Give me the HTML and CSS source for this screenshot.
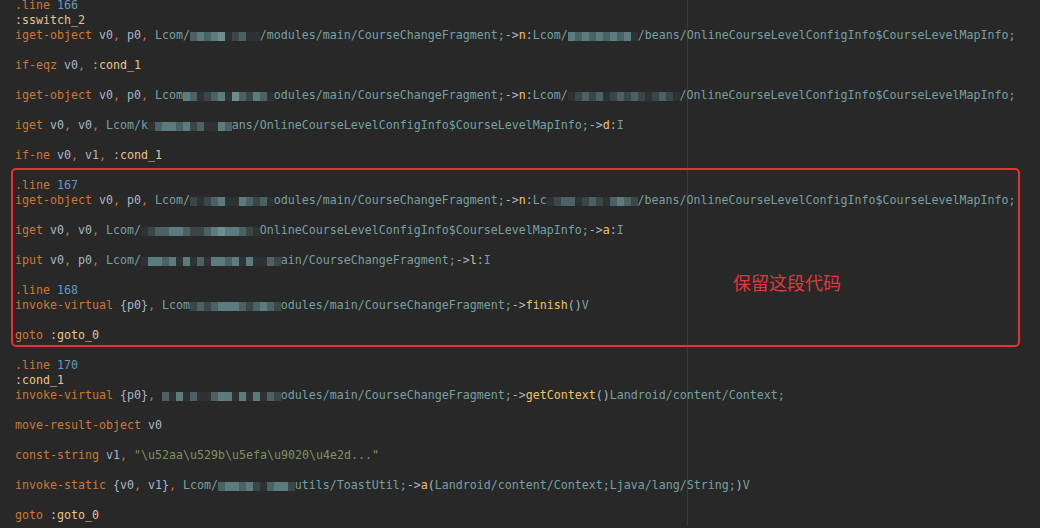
FILE: index.html
```html
<!DOCTYPE html>
<html lang="zh-CN">
<head>
    <meta charset="UTF-8">
    <meta name="viewport" content="width=device-width, initial-scale=1.0">
    <title>CourseChangeFragment.smali</title>
    <link rel="stylesheet" href="styles.css">
</head>
<body>

<div class="editor">
<pre class="code"><span class="k">.line</span> <span class="n">166</span>
<span class="l">:sswitch_2</span>
<span class="k">iget-object</span> <span class="r">v0</span><span class="p">,</span> <span class="r">p0</span><span class="p">,</span> <span class="t">Lcom/</span><span class="rd"><i class="b"></i><i class="c"></i><i class="b"></i><i class="c"></i><i class="d"></i><i></i><i class="a"></i><i class="b"></i><i></i><i></i></span><span class="t">/modules/main/CourseChangeFragment;</span>-&gt;<span class="f">n</span>:<span class="t">Lcom/</span><span class="rd"><i class="c"></i><i class="b"></i><i class="c"></i><i class="b"></i><i class="c"></i><i class="b"></i><i class="c"></i><i class="b"></i><i class="c"></i><i></i></span><span class="t">/beans/OnlineCourseLevelConfigInfo$CourseLevelMapInfo;</span>

<span class="k">if-eqz</span> <span class="r">v0</span><span class="p">,</span> :<span class="l">cond_1</span>

<span class="k">iget-object</span> <span class="r">v0</span><span class="p">,</span> <span class="r">p0</span><span class="p">,</span> <span class="t">Lcom</span><span class="rd"><i class="c"></i><i class="b"></i><i></i><i class="a"></i><i class="b"></i><i class="c"></i><i></i><i class="d"></i><i class="b"></i><i class="a"></i><i class="c"></i><i class="b"></i><i></i></span><span class="t">odules/main/CourseChangeFragment;</span>-&gt;<span class="f">n</span>:<span class="t">Lcom/</span><span class="rd"><i></i><i class="a"></i><i class="b"></i><i class="a"></i><i class="b"></i><i></i><i class="a"></i><i class="b"></i><i class="a"></i><i class="b"></i><i class="a"></i><i></i><i class="a"></i><i class="b"></i><i class="a"></i><i></i></span><span class="t">/OnlineCourseLevelConfigInfo$CourseLevelMapInfo;</span>

<span class="k">iget</span> <span class="r">v0</span><span class="p">,</span> <span class="r">v0</span><span class="p">,</span> <span class="t">Lcom/k</span><span class="rd"><i></i><i class="b"></i><i class="c"></i><i class="c"></i><i class="b"></i><i class="c"></i><i class="a"></i><i class="b"></i><i></i><i></i><i class="c"></i><i class="b"></i></span><span class="t">ans/OnlineCourseLevelConfigInfo$CourseLevelMapInfo;</span>-&gt;<span class="f">d</span>:<span class="t">I</span>

<span class="k">if-ne</span> <span class="r">v0</span><span class="p">,</span> <span class="r">v1</span><span class="p">,</span> :<span class="l">cond_1</span>

<span class="k">.line</span> <span class="n">167</span>
<span class="k">iget-object</span> <span class="r">v0</span><span class="p">,</span> <span class="r">p0</span><span class="p">,</span> <span class="t">Lcom/</span><span class="rd"><i class="a"></i><i></i><i class="a"></i><i class="b"></i><i class="c"></i><i></i><i></i><i class="c"></i><i class="b"></i><i class="a"></i><i class="b"></i><i></i></span><span class="t">odules/main/CourseChangeFragment;</span>-&gt;<span class="f">n</span>:<span class="t">Lc</span><span class="rd"><i></i><i class="a"></i><i class="b"></i><i class="b"></i><i></i><i class="a"></i><i class="b"></i><i class="a"></i><i></i><i class="b"></i><i class="c"></i><i class="b"></i><i class="a"></i></span><span class="t">/beans/OnlineCourseLevelConfigInfo$CourseLevelMapInfo;</span>

<span class="k">iget</span> <span class="r">v0</span><span class="p">,</span> <span class="r">v0</span><span class="p">,</span> <span class="t">Lcom/</span><span class="rd"><i></i><i class="a"></i><i class="b"></i><i class="b"></i><i class="c"></i><i class="c"></i><i class="b"></i><i class="a"></i><i class="a"></i><i class="b"></i><i class="c"></i><i class="d"></i><i class="c"></i><i class="c"></i><i class="b"></i><i class="a"></i><i></i></span><span class="t">OnlineCourseLevelConfigInfo$CourseLevelMapInfo;</span>-&gt;<span class="f">a</span>:<span class="t">I</span>

<span class="k">iput</span> <span class="r">v0</span><span class="p">,</span> <span class="r">p0</span><span class="p">,</span> <span class="t">Lcom/</span><span class="rd"><i></i><i class="c"></i><i class="c"></i><i class="b"></i><i class="c"></i><i></i><i class="c"></i><i></i><i class="b"></i><i></i><i class="c"></i><i class="c"></i><i class="b"></i><i class="c"></i><i></i><i class="c"></i><i></i><i></i><i class="b"></i><i class="a"></i></span><span class="t">ain/CourseChangeFragment;</span>-&gt;<span class="f">l</span>:<span class="t">I</span>

<span class="k">.line</span> <span class="n">168</span>
<span class="k">invoke-virtual</span> {<span class="r">p0</span>}<span class="p">,</span> <span class="t">Lcom</span><span class="rd"><i class="a"></i><i class="b"></i><i class="a"></i><i class="b"></i><i class="c"></i><i class="c"></i><i class="c"></i><i class="b"></i><i class="a"></i><i class="b"></i><i class="c"></i><i class="b"></i><i class="a"></i></span><span class="t">odules/main/CourseChangeFragment;</span>-&gt;<span class="f">finish</span>()<span class="t">V</span>

<span class="k">goto</span> <span class="l">:goto_0</span>

<span class="k">.line</span> <span class="n">170</span>
<span class="l">:cond_1</span>
<span class="k">invoke-virtual</span> {<span class="r">p0</span>}<span class="p">,</span> <span class="rd"><i class="b"></i><i></i><i class="c"></i><i></i><i class="b"></i><i></i><i></i><i class="b"></i><i class="c"></i><i class="c"></i><i></i><i class="c"></i><i></i><i class="c"></i><i></i><i class="b"></i><i class="a"></i></span><span class="t">odules/main/CourseChangeFragment;</span>-&gt;<span class="f">getContext</span>()<span class="t">Landroid/content/Context;</span>

<span class="k">move-result-object</span> <span class="r">v0</span>

<span class="k">const-string</span> <span class="r">v1</span><span class="p">,</span> <span class="s">"\u52aa\u529b\u5efa\u9020\u4e2d..."</span>

<span class="k">invoke-static</span> {<span class="r">v0</span><span class="p">,</span> <span class="r">v1</span>}<span class="p">,</span> <span class="t">Lcom/</span><span class="rd"><i class="b"></i><i class="c"></i><i class="c"></i><i class="b"></i><i class="c"></i><i class="a"></i><i></i><i class="b"></i><i class="c"></i><i class="c"></i><i class="a"></i></span><span class="t">utils/ToastUtil;</span>-&gt;<span class="f">a</span>(<span class="t">Landroid/content/Context;Ljava/lang/String;</span>)<span class="t">V</span>

<span class="k">goto</span> <span class="l">:goto_0</span></pre>

    <div class="mark">
        <span class="mark-note">保留这段代码</span>
    </div>
</div>

</body>
</html>
```

FILE: styles.css
```css
body, html {
    margin: 0;
    padding: 0;
    width: 100%;
    height: 100%;
    overflow: hidden;
    background: #282828;
}

.editor {
    position: relative;
    height: 100%;
    /* right margin guide */
    background: linear-gradient(to right, transparent 687px, #3b3b3b 687px, #3b3b3b 688px, transparent 688px);
}

.code {
    margin: -2px 0 0 0;
    padding: 0 0 0 15px;
    font-family: 'DejaVu Sans Mono', 'Liberation Mono', monospace;
    font-size: 11.63px;
    line-height: 15px;
    color: #a9b7c6;
    white-space: pre;
}

.k { color: #cc7832; }
.n { color: #6897bb; }
.r { color: #a9b7c6; }
.p { color: #cc7832; }
.t { color: #77a0a2; }
.l { color: #e9c587; }
.f { color: #f2c26b; }
.s { color: #7f9160; }

/* pixelated redaction */
.rd i {
    display: inline-block;
    width: 1ch;
    height: 9px;
    vertical-align: -2px;
    background: #2e3233;
}

.rd i.a { background: #3a4647; }
.rd i.b { background: #4c6164; }
.rd i.c { background: #5c7b7e; }
.rd i.d { background: #6d8d90; }

.mark {
    position: absolute;
    left: 11px;
    top: 170px;
    width: 1009px;
    height: 179px;
    box-sizing: border-box;
    border: 2px solid #e8302e;
    border-radius: 5px;
}

.mark-note {
    position: absolute;
    left: 720px;
    top: 103px;
    font-family: 'Noto Sans CJK SC', sans-serif;
    font-size: 18px;
    line-height: 18px;
    color: #e2363c;
}
```
